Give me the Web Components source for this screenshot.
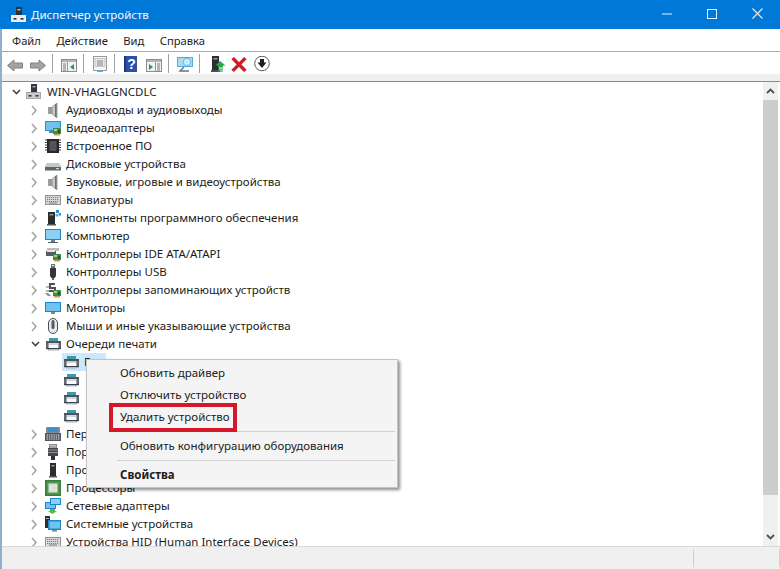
<!DOCTYPE html>
<html lang="ru">
<head>
<meta charset="utf-8">
<title>Диспетчер устройств</title>
<style>
  html, body { margin: 0; padding: 0; background: #fff; overflow: hidden; }
</style>
</head>
<body>
<device-window>
	<title-bar slot="title">Диспетчер устройств</title-bar>
	<menu-bar slot="menu"></menu-bar>
	<tool-bar slot="tools"></tool-bar>
	<device-tree slot="tree"></device-tree>
	<status-bar slot="status"></status-bar>
	<context-menu slot="overlay"></context-menu>
</device-window>

<script>
const FONT = `"Noto Sans", "Open Sans", sans-serif`;

const svg = (body, w = 16, h = 16) => `<svg width="${w}" height="${h}" viewBox="0 0 ${w} ${h}" xmlns="http://www.w3.org/2000/svg">${body}</svg>`;

const greenCard = `<rect x="8" y="8" width="8" height="6" fill="#3d8c4a"/><rect x="9" y="9" width="3" height="2" fill="#a5cf8f"/><rect x="13" y="10" width="2" height="3" fill="#20552c"/><path d="M9 14h6v1.500H9z" fill="#c2a44c"/>`;
const printer = `<rect x="4" y="2" width="9" height="3" fill="#3f9aa8"/><rect x="1" y="5" width="15" height="2" fill="#4a5560"/><rect x="1" y="7" width="2.500" height="6" fill="#5d6872"/><rect x="13.500" y="7" width="2.500" height="6" fill="#5d6872"/><rect x="3.500" y="8" width="10" height="6" fill="#fafafa" stroke="#8a949c" stroke-width=".7"/><rect x="1" y="12" width="15" height="1.200" fill="#39424a"/>`;

const ICONS = {
	root: svg(`<rect x="5" y="0" width="6" height="8" fill="#33373d"/><rect x="6.500" y="2" width="3" height="1.400" fill="#a9b0b6"/><rect x="0" y="8" width="15" height="7" fill="#a3a7ab"/><rect x="1" y="9" width="13" height="5" fill="#c9cccf"/><rect x="2.500" y="11" width="3" height="1.600" fill="#33373d"/><rect x="9.500" y="11" width="3" height="1.600" fill="#33373d"/>`),
	speaker: svg(`<rect x="3" y="5" width="4" height="7" fill="#9c9c9c"/><path d="M7 5l5-4v15l-5-4z" fill="#c8c8c8" stroke="#848484" stroke-width=".7"/><rect x="10" y="2" width="1.600" height="13" fill="#707070"/>`),
	video: svg(`<rect x="0" y="1" width="16" height="10" fill="#2f8fd0"/><rect x="1" y="2" width="14" height="8" fill="#70c1ec"/>${greenCard}<rect x="4" y="11" width="4" height="2" fill="#6c7a85"/>`),
	chip: svg(`<rect x="2" y="1" width="12" height="14" fill="#26282a"/><rect x="4.500" y="3" width="7" height="10" fill="#50545a"/><path d="M0 2h2M0 4.500h2M0 7h2M0 9.500h2M0 12h2M14 2h2M14 4.500h2M14 7h2M14 9.500h2M14 12h2" stroke="#3a3a3a" stroke-width="1"/>`),
	disk: svg(`<path d="M2 7h12l2 3v4H0v-4z" fill="#c6c6c6"/><rect x="0" y="11" width="16" height="3.500" fill="#5f6468"/><rect x="11" y="12" width="3" height="1.200" fill="#b9e6a8"/>`),
	keyboard: svg(`<rect x="0" y="3" width="16" height="10" fill="#8f9396"/><rect x="1" y="4" width="14" height="8" fill="#d7d9db"/><path d="M2 5.500h12M2 7.500h12M2 9.500h12" stroke="#7b8084" stroke-width="1" stroke-dasharray="1.200 .8"/><rect x="4" y="10.500" width="8" height="1" fill="#7b8084"/>`),
	software: svg(`<rect x="3" y="2" width="7" height="13" fill="#2c2c2c"/><rect x="4.500" y="4" width="4" height="1.400" fill="#999"/><rect x="2" y="14" width="9" height="1.500" fill="#555"/><rect x="11" y="0" width="3" height="3" fill="#2b8fd4"/><rect x="14" y="3" width="2" height="2.500" fill="#2b8fd4"/><rect x="10.500" y="4" width="3" height="2.500" fill="#53b0e8"/>`),
	computer: svg(`<rect x="0" y="1" width="16" height="11" fill="#1e86cc"/><rect x="1" y="2" width="14" height="9" fill="#8bd0f2"/><rect x="6" y="12" width="4" height="2" fill="#71808a"/><rect x="3" y="14" width="10" height="1" fill="#4d5a63"/>`),
	ide: svg(`<path d="M2 2h12v3H2z" fill="#bcbcbc"/><rect x="1" y="5" width="10" height="5" fill="#585d60"/><rect x="2" y="4" width="8" height="2" fill="#e4e4e4"/>${greenCard}`),
	usb: svg(`<rect x="6" y="0" width="4" height="4" fill="#6f7478"/><rect x="7" y="1" width="2" height="1" fill="#e8e8e8"/><path d="M5 4h6v8l-1.500 2h-3L5 12z" fill="#33363a"/><rect x="7" y="14" width="2" height="2" fill="#5a5e62"/>`),
	storage: svg(`<path d="M4 1h6v2H6v2h5v5H4V8h5V7H4z" fill="#4d5256"/><path d="M1 4h3v2H1zM1 8h3v2H1z" fill="#b5b5b5"/><path d="M0 11l3 3h3l-3-3z" fill="#8a8a8a"/>${greenCard}`),
	monitor: svg(`<rect x="0" y="2" width="16" height="10" fill="#1e86cc"/><rect x="1" y="3" width="14" height="8" fill="#6ec3ef"/><rect x="6" y="12" width="4" height="2" fill="#7c8a93"/>`),
	mouse: svg(`<rect x="3.500" y="0.500" width="9" height="15" rx="4.500" fill="#e8eaec" stroke="#4a4f55" stroke-width="1"/><rect x="6.500" y="2" width="3" height="9" rx="1.500" fill="#565b61"/>`),
	printer: svg(printer),
	portable: svg(`<rect x="1" y="1" width="14" height="6" rx="1" fill="#7f8a92"/><rect x="3" y="2" width="10" height="4" fill="#3c8fc4"/><rect x="0" y="7" width="16" height="8" fill="#4f5660"/><path d="M1.500 9h13M1.500 11h13M1.500 13h13" stroke="#d9dde0" stroke-width="1" stroke-dasharray="1.500 .8"/>`),
	port: svg(`<rect x="4" y="0" width="8" height="4" fill="#8a8a8a"/><path d="M5 1.500h6M5 3h6" stroke="#d0d0d0" stroke-width=".8"/><rect x="3" y="4" width="10" height="8" fill="#44484c"/><path d="M3 6h10M3 8.500h10" stroke="#8d9194" stroke-width="1"/><rect x="6" y="12" width="4" height="4" fill="#2f3235"/>`),
	program: svg(`<rect x="5" y="1" width="6" height="13" fill="#2c2c2c"/><rect x="6.500" y="3" width="3" height="1.500" fill="#9a9a9a"/><rect x="4" y="14" width="8" height="1.500" fill="#555"/>`),
	cpu: svg(`<rect x="0" y="0" width="16" height="16" fill="#3c7d3c"/><rect x="1.500" y="1.500" width="13" height="13" fill="#4f9a4f"/><rect x="3.500" y="3.500" width="9" height="9" fill="#dde2d8"/>`),
	network: svg(`<rect x="0" y="4" width="11" height="7" fill="#1e86cc"/><rect x="1" y="5" width="9" height="5" fill="#6ec3ef"/><rect x="5" y="0" width="11" height="7" fill="#1e86cc"/><rect x="6" y="1" width="9" height="5" fill="#8bd0f2"/><path d="M5 11h5v2h2l-4.500 3L3 13h2z" fill="#56b947"/>`),
	system: svg(`<rect x="0" y="0" width="5" height="12" fill="#2c2f33"/><rect x="1" y="2" width="3" height="1" fill="#aaa"/><rect x="3" y="4" width="13" height="10" fill="#1e86cc"/><rect x="4.500" y="5.500" width="10.500" height="7" fill="#6ec3ef"/><rect x="7" y="14" width="5" height="1.500" fill="#79858d"/>`)
};

const TOOL_ICONS = {
	back: `<path d="M.5 9.500L7 4v3h8.500v5H7v3z" fill="#a3a3a3" stroke="#808080" stroke-width="1"/>`,
	forward: `<path d="M15.500 9.500L9 4v3H.5v5H9v3z" fill="#a3a3a3" stroke="#808080" stroke-width="1"/>`,
	panelLeft: `<rect x=".5" y="3.500" width="15" height="12" fill="#f2f2f2" stroke="#8b8b8b"/><rect x="1" y="4" width="14" height="2" fill="#b5b5b5"/><path d="M2 8h3M2 10h3M2 12h3M2 14h3" stroke="#777"/><rect x="6" y="6" width="1" height="9" fill="#999"/><path d="M13 8v6l-4-3z" fill="#2d9a4a"/>`,
	sheet: `<rect x="1.500" y=".5" width="13" height="14" fill="#f7f7f7" stroke="#9a9a9a"/><rect x="3" y="2.500" width="10" height="8" fill="#e6e6e6" stroke="#aaa" stroke-width=".6"/><path d="M5 5h6M5 7h6M5 9h6" stroke="#7f8890"/><rect x="5" y="14" width="6" height="2" fill="#58b0c9"/>`,
	help: `<rect x="0" y="0" width="13" height="16" fill="#2d4fa8"/><rect x="0" y="0" width="2" height="16" fill="#1f3680"/><text x="7.500" y="13" font-family="Liberation Sans, sans-serif" font-size="14" font-weight="700" fill="#fff" text-anchor="middle">?</text>`,
	panelRight: `<rect x=".5" y="3.500" width="15" height="12" fill="#f2f2f2" stroke="#8b8b8b"/><rect x="1" y="4" width="14" height="2" fill="#b5b5b5"/><path d="M11 8h3M11 10h3M11 12h3M11 14h3" stroke="#777"/><rect x="9" y="6" width="1" height="9" fill="#999"/><path d="M3 8v6l4-3z" fill="#2d9a4a"/>`,
	scan: `<rect x=".5" y="1.500" width="15" height="9" fill="#a8dcf5" stroke="#57aadb"/><circle cx="10" cy="6" r="3.800" fill="#c6ebfb" stroke="#6fb6dc"/><path d="M7 11l-4 4h9" fill="none" stroke="#6f7478" stroke-width="1.400"/>`,
	plug: `<rect x="1" y="0" width="7" height="14" fill="#2c2f2e"/><rect x="2.500" y="2" width="4" height="1.500" fill="#a0a0a0"/><rect x="0" y="14" width="9" height="2" fill="#4b4f4e"/><path d="M9 5l-4.500 4.500H7v2h5v-2h2.500z" fill="#2ba84a"/><rect x="7" y="12.500" width="5" height="1.200" fill="#2ba84a"/><rect x="7" y="14.500" width="5" height="1.200" fill="#2ba84a"/>`,
	remove: `<path d="M2.800 3.300l10.400 10.400M13.200 3.300L2.800 13.700" stroke="#cf1f26" stroke-width="3.400" stroke-linecap="square"/>`,
	update: `<circle cx="8" cy="7.500" r="7.300" fill="#fff" stroke="#5a5a5a" stroke-width="1"/><path d="M6 3h4v3.500h2.500L8 12 3.500 6.500H6z" fill="#1f1f1f"/>`
};

class DeviceWindow extends HTMLElement {
	constructor() {
		super();
		this.attachShadow({ mode: 'open' }).innerHTML = `
			<style>
				:host {
					position: relative;
					display: flex;
					flex-direction: column;
					width: 780px;
					height: 569px;
					overflow: hidden;
					background: #fff;
					font: 11.5px ${FONT};
					color: #1c1c1c;
				}
				.main {
					flex: 1;
					min-height: 0;
					display: flex;
					border-left: 2px solid #8fb0cc;
				}
				.column {
					flex: 1;
					min-width: 0;
					display: flex;
					flex-direction: column;
				}
			</style>
			<slot name="title"></slot>
			<div class="main">
				<div class="column">
					<slot name="menu"></slot>
					<slot name="tools"></slot>
					<slot name="tree"></slot>
					<slot name="status"></slot>
				</div>
			</div>
			<slot name="overlay"></slot>
		`;
	}
}

class TitleBar extends HTMLElement {
	constructor() {
		super();
		this.attachShadow({ mode: 'open' }).innerHTML = `
			<style>
				:host {
					display: flex;
					align-items: center;
					height: 29px;
					flex: none;
					background: #0078d7;
					color: #f4f9fd;
				}
				.icon { display: flex; margin: 0 4px 0 11px; }
				.text { flex: 1; }
				.controls { display: flex; align-items: center; gap: 35px; margin: 0 17px 2px 0; }
				.controls svg { display: block; }
			</style>
			<span class="icon">${svg(`<rect x="5" y="0" width="6" height="8" fill="#2f3338"/><rect x="6.500" y="2" width="3" height="1.400" fill="#b9c0c6"/><rect x="0" y="8" width="15" height="7" fill="#e9edf0"/><rect x="2.500" y="11" width="3" height="1.600" fill="#2f3338"/><rect x="9.500" y="11" width="3" height="1.600" fill="#2f3338"/>`)}</span>
			<span class="text"><slot></slot></span>
			<span class="controls">
				${svg(`<path d="M2 6h10" stroke="#e8f3fb" stroke-width="1"/>`, 12, 12)}
				${svg(`<rect x=".5" y=".5" width="9" height="9" fill="none" stroke="#e8f3fb"/>`, 10, 10)}
				${svg(`<path d="M.5.500l10 10M10.500.500l-10 10" stroke="#e8f3fb" stroke-width="1.100"/>`, 11, 11)}
			</span>
		`;
	}
}

class MenuBar extends HTMLElement {
	constructor() {
		super();
		const items = ['Файл', 'Действие', 'Вид', 'Справка'];
		this.attachShadow({ mode: 'open' }).innerHTML = `
			<style>
				:host {
					display: flex;
					align-items: center;
					flex: none;
					gap: 15.500px;
					height: 22px;
					padding-left: 10px;
					font-size: 11.200px;
					border-bottom: 1px solid #a9a9a9;
				}
			</style>
			${items.map(a => `<span>${a}</span>`).join('')}
		`;
	}
}

class ToolBar extends HTMLElement {
	constructor() {
		super();
		const groups = [
			[['back', 7], ['forward', 0]],
			[['panelLeft', 0]],
			[['sheet', 0]],
			[['help', 6], ['panelRight', 0]],
			[['scan', 0]],
			[['plug', 4], ['remove', 7], ['update', 0]]
		];
		this.attachShadow({ mode: 'open' }).innerHTML = `
			<style>
				:host {
					display: block;
					flex: none;
				}
				.bar {
					display: flex;
					align-items: center;
					box-sizing: border-box;
					height: 22px;
					padding: 1px 0 0 5px;
				}
				.group { display: flex; align-items: center; }
				.group.help { margin-left: 1px; }
				.group.device { margin-left: 3px; }
				.tool { display: flex; }
				.sep { width: 1px; height: 19px; background: #a0a0a0; margin: 0 8px 0 6px; }
				.band { height: 7px; background: #f0f0f0; border-bottom: 1px solid #8a8a8a; }
			</style>
			<div class="bar">
				${groups.map((group, i) => `
					<div class="group ${group[0][0] === 'help' ? 'help' : ''} ${group[0][0] === 'plug' ? 'device' : ''}">
						${group.map(([name, gap]) => `<span class="tool" style="margin-right:${gap}px">${svg(TOOL_ICONS[name])}</span>`).join('')}
					</div>
					${i < groups.length - 1 ? '<span class="sep"></span>' : ''}`).join('')}
			</div>
			<div class="band"></div>
		`;
	}
}

class TreeRow extends HTMLElement {
	constructor() {
		super();
		const level = parseInt(this.getAttribute('level') || '1');
		const arrow = this.getAttribute('arrow');
		const icon = this.getAttribute('icon');
		const paths = {
			closed: '<path d="M1 1l4 4.500L1 10" fill="none" stroke="#a6a6a6" stroke-width="1.600"/>',
			open: '<path d="M1 3l3.500 3.500L8 3" fill="none" stroke="#444" stroke-width="1.600"/>'
		};
		this.attachShadow({ mode: 'open' }).innerHTML = `
			<style>
				:host {
					display: flex;
					align-items: center;
					height: 18px;
					white-space: nowrap;
				}
				.arrow { width: 10px; height: 11px; flex: none; display: flex; }
				.icon { display: flex; flex: none; }
				:host([level="2"]) .icon { margin-left: 1px; }
				.label { padding: 0 3px 0 5px; line-height: 18px; }
				:host([selected]) .cell { background: #cce8ff; }
				.cell { display: flex; align-items: center; height: 18px; }
			</style>
			<span class="arrow" style="margin-left:${[10, 29, 48][level]}px; margin-right:${[4, 4, 2][level]}px">${arrow ? `<svg width="10" height="11" viewBox="0 0 10 11">${paths[arrow]}</svg>` : ''}</span>
			<span class="cell">
				<span class="icon">${ICONS[icon]}</span>
				<span class="label"><slot></slot></span>
			</span>
		`;
	}
}

class DeviceTree extends HTMLElement {
	constructor() {
		super();
		const rows = [
			['speaker', 'Аудиовходы и аудиовыходы'],
			['video', 'Видеоадаптеры'],
			['chip', 'Встроенное ПО'],
			['disk', 'Дисковые устройства'],
			['speaker', 'Звуковые, игровые и видеоустройства'],
			['keyboard', 'Клавиатуры'],
			['software', 'Компоненты программного обеспечения'],
			['computer', 'Компьютер'],
			['ide', 'Контроллеры IDE ATA/ATAPI'],
			['usb', 'Контроллеры USB'],
			['storage', 'Контроллеры запоминающих устройств'],
			['monitor', 'Мониторы'],
			['mouse', 'Мыши и иные указывающие устройства']
		];
		const after = [
			['portable', 'Пер'],
			['port', 'Пор'],
			['program', 'Про'],
			['cpu', 'Процессоры'],
			['network', 'Сетевые адаптеры'],
			['system', 'Системные устройства'],
			['keyboard', 'Устройства HID (Human Interface Devices)']
		];
		const row = ([icon, label]) => `<tree-row level="1" arrow="closed" icon="${icon}">${label}</tree-row>`;
		this.attachShadow({ mode: 'open' }).innerHTML = `
			<style>
				:host {
					display: flex;
					flex: 1;
					min-height: 0;
					overflow: hidden;
				}
				.rows { flex: 1; min-width: 0; overflow: hidden; padding-top: 1px; }
			</style>
			<div class="rows">
				<tree-row level="0" arrow="open" icon="root">WIN-VHAGLGNCDLC</tree-row>
				${rows.map(row).join('')}
				<tree-row level="1" arrow="open" icon="printer">Очереди печати</tree-row>
				<tree-row level="2" icon="printer" selected>Fax</tree-row>
				<tree-row level="2" icon="printer"></tree-row>
				<tree-row level="2" icon="printer"></tree-row>
				<tree-row level="2" icon="printer"></tree-row>
				${after.map(row).join('')}
			</div>
			<tree-scrollbar></tree-scrollbar>
		`;
	}
}

class TreeScrollbar extends HTMLElement {
	constructor() {
		super();
		this.attachShadow({ mode: 'open' }).innerHTML = `
			<style>
				:host {
					display: flex;
					flex-direction: column;
					flex: none;
					width: 15px;
					margin-right: 2px;
					background: #f0f0f0;
				}
				.btn { height: 18px; display: flex; align-items: center; justify-content: center; flex: none; }
				.thumb { height: 395px; flex: none; background: #cdcdcd; }
				.rest { flex: 1; }
			</style>
			<div class="btn"><svg width="9" height="6" viewBox="0 0 9 6"><path d="M1 5l3.500-3.500L8 5" fill="none" stroke="#505050" stroke-width="1.800"/></svg></div>
			<div class="thumb"></div>
			<div class="rest"></div>
			<div class="btn"><svg width="9" height="6" viewBox="0 0 9 6"><path d="M1 1l3.500 3.500L8 1" fill="none" stroke="#505050" stroke-width="1.800"/></svg></div>
		`;
	}
}

class StatusBar extends HTMLElement {
	constructor() {
		super();
		this.attachShadow({ mode: 'open' }).innerHTML = `
			<style>
				:host {
					display: flex;
					flex: none;
					height: 23px;
					box-sizing: border-box;
					padding: 2px 0;
					background: #f0f0f0;
					border-top: 1px solid #d9d9d9;
				}
				.main { width: 691px; border-right: 1px solid #cfcfcf; }
				.side { flex: 1; border-right: 1px solid #cfcfcf; }
			</style>
			<div class="main"></div>
			<div class="side"></div>
		`;
	}
}

class ContextMenu extends HTMLElement {
	constructor() {
		super();
		const item = (text, bold) => `<div class="item${bold ? ' bold' : ''}">${text}</div>`;
		this.attachShadow({ mode: 'open' }).innerHTML = `
			<style>
				:host {
					position: absolute;
					left: 86px;
					top: 359px;
					width: 312px;
					box-sizing: border-box;
					padding: 2px 2px 1px;
					background: #f4f4f4;
					border: 1px solid #c4c4c4;
					box-shadow: 2px 2px 3px rgba(0, 0, 0, .45);
				}
				.item {
					height: 22px;
					line-height: 22px;
					padding-left: 31px;
				}
				.bold { font-weight: 700; }
				.sep { height: 1px; margin: 3px 0 3px 28px; background: #d2d2d2; }
				.mark {
					position: absolute;
					left: 22px;
					top: 43px;
					width: 128px;
					height: 29px;
					box-sizing: border-box;
					border: 4px solid #d4182a;
				}
			</style>
			${item('Обновить драйвер')}
			${item('Отключить устройство')}
			${item('Удалить устройство')}
			<div class="sep"></div>
			${item('Обновить конфигурацию оборудования')}
			<div class="sep"></div>
			${item('Свойства', true)}
			<div class="mark"></div>
		`;
	}
}

customElements.define('tree-row', TreeRow);
customElements.define('tree-scrollbar', TreeScrollbar);
customElements.define('device-tree', DeviceTree);
customElements.define('title-bar', TitleBar);
customElements.define('menu-bar', MenuBar);
customElements.define('tool-bar', ToolBar);
customElements.define('status-bar', StatusBar);
customElements.define('context-menu', ContextMenu);
customElements.define('device-window', DeviceWindow);
</script>
</body>
</html>
